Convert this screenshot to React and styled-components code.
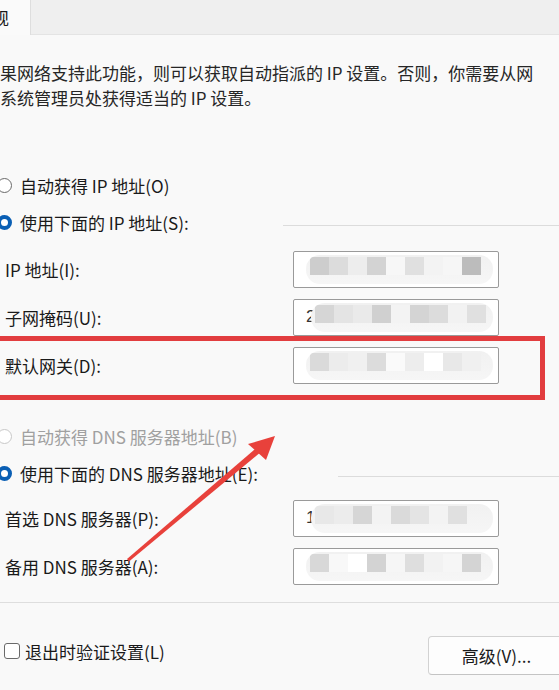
import React from "react";
import styled, { createGlobalStyle } from "styled-components";

const Global = createGlobalStyle`
  html, body { margin: 0; padding: 0; background: #f9f9f9; }
  body {
    font-family: "Noto Sans CJK SC", "Noto Sans", sans-serif;
    color: #1a1a1a;
  }
`;

const Page = styled.div`
  position: relative;
  width: 559px;
  height: 690px;
  overflow: hidden;
  background: #f9f9f9;
  font-size: 17px;
`;

const TabStrip = styled.div`
  height: 34px;
  background: #efefef;
  border-bottom: 1px solid #e4e4e4;
  display: flex;
`;

const Tab = styled.div`
  width: 31px;
  height: 35px;
  background: #fafafa;
  border-right: 1px solid #dedede;
  display: flex;
  justify-content: flex-end;
  align-items: center;
  padding-right: 21px;
  box-sizing: border-box;
  overflow: hidden;
  white-space: nowrap;
  line-height: 1;
`;

const Para = styled.p`
  margin: 25px 0 0 -17px;
  line-height: 25px;
  white-space: nowrap;
  color: #262626;
`;

const Section = styled.div`
  display: flex;
  flex-direction: column;
  margin-top: ${(p) => p.$top}px;
`;

const RadioRow = styled.div`
  height: 37px;
  display: flex;
  align-items: center;
  color: ${(p) => (p.$disabled ? "#a0a0a0" : "#1a1a1a")};
  white-space: nowrap;
`;

const Radio = styled.span`
  width: 15px;
  height: 15px;
  margin-left: -3px;
  margin-right: 8px;
  border-radius: 50%;
  box-sizing: border-box;
  flex: none;
  background: #fff;
  border: ${(p) =>
    p.$checked ? "4px solid #0a5fb4" : p.$disabled ? "1px solid #c8c8c8" : "1px solid #6a6a6a"};
`;

const GroupLine = styled.div`
  flex: 1;
  height: 1px;
  background: #dcdcdc;
  margin-left: ${(p) => p.$gap}px;
  margin-top: 6px;
`;

const Fields = styled.div`
  display: flex;
  flex-direction: column;
  gap: 11px;
  margin-top: ${(p) => p.$top}px;
`;

const FieldRow = styled.div`
  display: grid;
  grid-template-columns: 293px 206px;
  align-items: center;
`;

const Label = styled.span`
  padding-left: 5px;
  white-space: nowrap;
`;

const Input = styled.div`
  height: 37px;
  box-sizing: border-box;
  border: 1.5px solid #9a9a9a;
  border-radius: 2px;
  background: #fff;
  display: flex;
  align-items: center;
  padding-left: 12px;
  overflow: hidden;
`;

const Lead = styled.span`
  font-family: "Liberation Sans", sans-serif;
  font-size: 17px;
  color: #333;
  margin-right: -4px;
`;

const Blur = styled.div`
  flex: 1;
  height: 29px;
  margin-right: 5px;
  border-radius: 14px;
  background: linear-gradient(#f1f1f1, #f6f6f6);
  display: flex;
  align-items: flex-start;
  padding: 2px 0 0 4px;
  box-sizing: border-box;
  filter: blur(0.6px);
  overflow: hidden;
`;

const Cell = styled.span`
  width: 19px;
  height: 18px;
  flex: none;
`;

const Separator = styled.div`
  height: 1px;
  background: #dedede;
  margin-top: 17px;
`;

const Footer = styled.div`
  display: flex;
  justify-content: space-between;
  align-items: flex-start;
  margin-top: 33px;
`;

const Check = styled.label`
  display: flex;
  align-items: center;
  margin-top: 3px;
  margin-left: 4px;
  white-space: nowrap;
  gap: 5px;
`;

const Box = styled.span`
  width: 16px;
  height: 16px;
  box-sizing: border-box;
  border: 1.5px solid #6a6a6a;
  border-radius: 3px;
  background: #fff;
`;

const Button = styled.div`
  width: 140px;
  height: 39px;
  margin-right: -9px;
  box-sizing: border-box;
  border: 1px solid #d2d2d2;
  border-bottom-color: #c4c4c4;
  border-radius: 4px;
  background: #fdfdfd;
  display: flex;
  align-items: center;
  justify-content: center;
  padding-right: 3px;
`;

const Highlight = styled.div`
  position: absolute;
  left: -6px;
  top: 336px;
  width: 551px;
  height: 64px;
  box-sizing: border-box;
  border: 5px solid #e23d3f;
  pointer-events: none;
`;

const Arrow = styled.svg`
  position: absolute;
  left: 0;
  top: 0;
  pointer-events: none;
`;

const patterns = {
  ip: ["#cdcdcd", "#dcdcdc", "#ededed", "#d3d3d3", "#f7f7f7", "#e0e0e0", "#f3f3f3", "#f6f6f6", "#bcbcbc"],
  mask: ["#d6d6d6", "#e4e4e4", "#eaeaea", "#d0d0d0", "#f3f3f3", "#d4d4d4", "#dcdcdc", "#f2f2f2", "#e0e0e0"],
  gw: ["#dadada", "#ececec", "#f0f0f0", "#dcdcdc", "#fafafa", "#ededed", "#ffffff", "#e8e8e8", "#f0f0f0"],
  dns1: ["#e8e8e8", "#ececec", "#d6d6d6", "#f3f3f3", "#dadada", "#e4e4e4", "#f3f3f3", "#e0e0e0"],
  dns2: ["#d8d8d8", "#f8f8f8", "#ffffff", "#d3d3d3", "#f6f6f6", "#dedede", "#f2f2f2", "#f6f6f6", "#d4d4d4"],
};

function Field({ label, pattern, lead }) {
  return (
    <FieldRow>
      <Label>{label}</Label>
      <Input>
        {lead && <Lead>{lead}</Lead>}
        <Blur>
          {patterns[pattern].map((c, i) => (
            <Cell key={i} style={{ background: c }} />
          ))}
        </Blur>
      </Input>
    </FieldRow>
  );
}

export default function App() {
  return (
    <Page>
      <Global />
      <TabStrip>
        <Tab>常规</Tab>
      </TabStrip>
      <Para>
        如果网络支持此功能，则可以获取自动指派的 IP 设置。否则，你需要从网
        <br />
        络系统管理员处获得适当的 IP 设置。
      </Para>

      <Section $top={57}>
        <RadioRow>
          <Radio />
          自动获得 IP 地址(O)
        </RadioRow>
        <RadioRow>
          <Radio $checked />
          使用下面的 IP 地址(S):
          <GroupLine $gap={94} />
        </RadioRow>
      </Section>
      <Fields $top={9.5}>
        <Field label="IP 地址(I):" pattern="ip" />
        <Field label="子网掩码(U):" pattern="mask" lead="2" />
        <Field label="默认网关(D):" pattern="gw" />
      </Fields>

      <Section $top={34.5}>
        <RadioRow $disabled>
          <Radio $disabled />
          自动获得 DNS 服务器地址(B)
        </RadioRow>
        <RadioRow>
          <Radio $checked />
          使用下面的 DNS 服务器地址(E):
          <GroupLine $gap={80} />
        </RadioRow>
      </Section>
      <Fields $top={7.5}>
        <Field label="首选 DNS 服务器(P):" pattern="dns1" lead="1" />
        <Field label="备用 DNS 服务器(A):" pattern="dns2" />
      </Fields>

      <Separator />
      <Footer>
        <Check>
          <Box />
          退出时验证设置(L)
        </Check>
        <Button>高级(V)...</Button>
      </Footer>

      <Highlight />
      <Arrow width="559" height="690" viewBox="0 0 559 690">
        <path d="M127 559 L129 561.5 L262 451 L258 446.5 Z" fill="#e8413b" />
        <polygon points="275,436 248,444 266,460" fill="#e8413b" />
      </Arrow>
    </Page>
  );
}
